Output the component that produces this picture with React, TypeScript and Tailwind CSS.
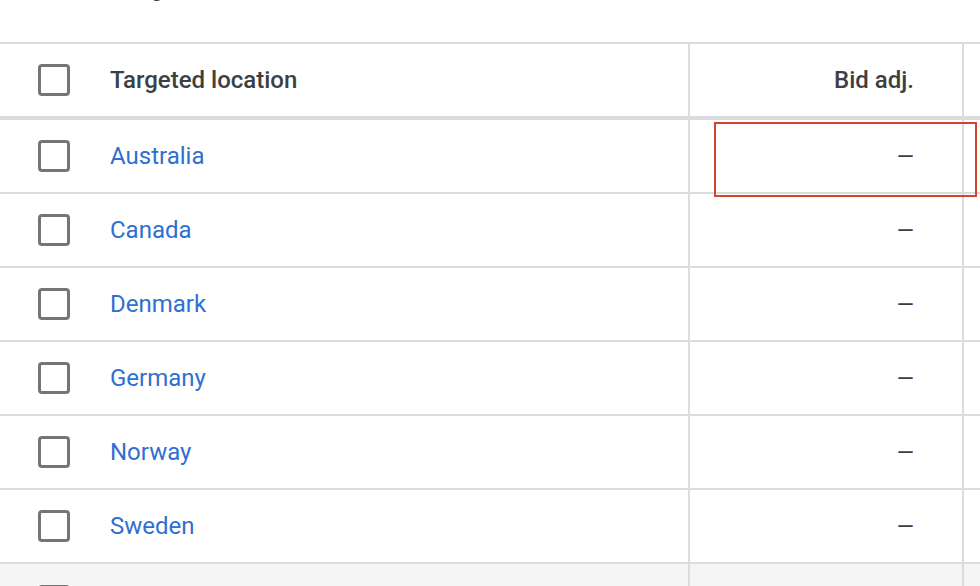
import React from 'react';

const rows = ['Australia', 'Canada', 'Denmark', 'Germany', 'Norway', 'Sweden'];

const Box: React.FC = () => (
  <div className="w-[32px] h-[32px] shrink-0 rounded-[4px] border-[3px] border-[#757575] bg-white" />
);

const App: React.FC = () => {
  return (
    <div className="relative w-[980px] h-[586px] overflow-hidden bg-white font-['Roboto',sans-serif]">
      {/* bit of the title cut off above */}
      <div className="h-[42px] overflow-hidden">
        <div className="-mt-[26px] pl-[116px] text-[24px] leading-[28px] font-medium text-[#3c4043]">Targets</div>
      </div>

      <div className="border-t-2 border-[#dadce0]">
        {/* header */}
        <div className="flex h-[76px] border-b-4 border-[#dadce0]">
          <div className="flex w-[690px] items-center border-r-2 border-[#dadce0] pl-[38px]">
            <Box />
            <span className="ml-[40px] text-[24px] font-medium text-[#3c4043]">Targeted location</span>
          </div>
          <div className="flex w-[274px] items-center justify-end border-r-2 border-[#dadce0] pr-[48px]">
            <span className="text-[24px] font-medium text-[#3c4043]">Bid adj.</span>
          </div>
          <div className="flex-1" />
        </div>

        {rows.map((name) => (
          <div key={name} className="flex h-[74px] border-b-2 border-[#dadce0]">
            <div className="flex w-[690px] items-center border-r-2 border-[#dadce0] pl-[38px]">
              <Box />
              <span className="ml-[40px] text-[24px] text-[#2f6fd0]">{name}</span>
            </div>
            <div className="flex w-[274px] items-center justify-end border-r-2 border-[#dadce0] pr-[48px]">
              <span className="text-[22px] text-[#3c4043]">—</span>
            </div>
            <div className="flex-1" />
          </div>
        ))}

        <div className="flex h-[74px] bg-[#f5f5f5]">
          <div className="flex w-[690px] items-center border-r-2 border-[#dadce0] pl-[38px]">
            <Box />
          </div>
          <div className="w-[274px] border-r-2 border-[#dadce0]" />
          <div className="flex-1" />
        </div>
      </div>

      {/* highlight annotation */}
      <div className="pointer-events-none absolute left-[714px] top-[122px] h-[75px] w-[263px] border-2 border-[#d5432a]" />
    </div>
  );
};

export default App;
